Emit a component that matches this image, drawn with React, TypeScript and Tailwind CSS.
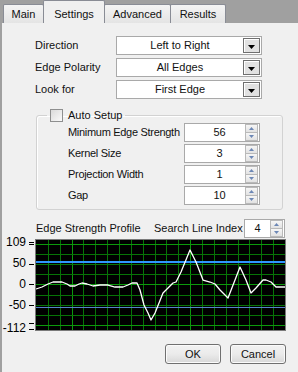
import React from "react";

const Tri = () => (
  <svg width="7" height="4" viewBox="0 0 7 4">
    <polygon points="0,0 7,0 3.5,4" fill="#000" />
  </svg>
);

function Combo({ value }: { value: string }) {
  return (
    <div className="w-[146px] shrink-0 h-[19px] bg-white border border-[#a9a9a9] flex items-center">
      <span className="flex-1 text-center leading-none whitespace-nowrap">{value}</span>
      <div className="w-[17px] h-[15px] mr-[1px] border border-[#6f6f6f] bg-[#e1e1e1] shadow-[inset_1px_1px_0_#ffffff] flex items-end justify-center pb-[3px]">
        <Tri />
      </div>
    </div>
  );
}

const SpinArrow = ({ up }: { up?: boolean }) => (
  <svg width="5" height="3" viewBox="0 0 5 3">
    <polygon points={up ? "0,3 5,3 2.5,0" : "0,0 5,0 2.5,3"} fill="#6c87b5" />
  </svg>
);

function Spin({ value, w, pl }: { value: string; w: string; pl: string }) {
  return (
    <div className={`${w} shrink-0 h-[19px] bg-white border border-[#a9a9a9] flex items-center`}>
      <span className={`flex-1 text-center leading-none ${pl}`}>{value}</span>
      <div className="w-[13px] h-[17px] mr-[1px] flex flex-col">
        <div className="flex-1 border border-[#b9b9b9] bg-gradient-to-b from-[#f6f6f6] to-[#e2e2e2] flex items-center justify-center">
          <SpinArrow up />
        </div>
        <div className="flex-1 border border-t-0 border-[#b9b9b9] bg-gradient-to-b from-[#f6f6f6] to-[#e2e2e2] flex items-center justify-center">
          <SpinArrow />
        </div>
      </div>
    </div>
  );
}

const profile: [number, number][] = [
  [36, 289], [42, 287], [48, 284], [53, 282], [62, 282], [67, 284], [70, 286], [75, 286],
  [79, 284], [82, 283], [87, 284], [93, 286], [100, 285], [108, 285], [115, 287], [123, 287],
  [128, 285], [132, 283], [137, 283], [140, 290], [144, 305], [148, 313], [151, 320],
  [155, 313], [163, 293], [168, 288], [173, 283], [176, 282], [181, 272], [190, 250],
  [196, 262], [203, 280], [210, 282], [215, 284], [220, 290], [228, 298], [235, 280],
  [240, 267], [246, 280], [251, 293], [256, 288], [263, 280], [266, 280], [271, 282],
  [276, 287], [285, 287],
];

function Chart() {
  const vy = (v: number) => 2 + ((109 - v) * 90) / 221;
  const pts = profile.map(([x, y]) => `${x - 2},${y - 238}`).join(" ");
  const vLines = Array.from({ length: 20 }, (_, i) => Math.round(34 + 11.857 * (i + 1)) + 0.5);
  const hVals = [100, 75, 50, 25, 0, -25, -50, -75, -100];
  const ticks = [3.7, 6.3, vy(50), vy(0), vy(-50), 85, 90.5];
  const labels: [string, number][] = [
    ["109", 5],
    ["50", vy(50)],
    ["0", vy(0)],
    ["-50", vy(-50) + 1],
    ["-112", 91],
  ];
  return (
    <svg width="296" height="94" className="overflow-visible block">
      <rect x="34" y="2" width="249" height="90" fill="#000" />
      {vLines.map((x, i) => (
        <line
          key={"v" + i}
          x1={x}
          x2={x}
          y1="2"
          y2="92"
          stroke={i === 2 || i === 12 ? "#0c9a0c" : "#077407"}
          strokeWidth="1"
        />
      ))}
      {hVals.map((v) => (
        <line
          key={"h" + v}
          x1="34"
          x2="283"
          y1={Math.round(vy(v)) + 0.5}
          y2={Math.round(vy(v)) + 0.5}
          stroke={v === 0 || v === 100 || v === -100 ? "#0c9a0c" : "#077407"}
          strokeWidth="1"
        />
      ))}
      <line x1="34" x2="283" y1="24" y2="24" stroke="#2f95ff" strokeWidth="2" />
      <line x1="34" x2="283" y1="69.5" y2="69.5" stroke="#5684cc" strokeWidth="1" />
      <polyline points={pts} fill="none" stroke="#ffffff" strokeWidth="1.3" strokeLinejoin="round" />
      <rect x="33.5" y="1.5" width="250" height="91" fill="none" stroke="#7a7a7a" strokeWidth="1" />
      {ticks.map((t, i) => (
        <line key={"t" + i} x1="27" x2="32" y1={Math.round(t) + 0.5} y2={Math.round(t) + 0.5} stroke="#000" strokeWidth="1" />
      ))}
      {labels.map(([s, y]) => (
        <text
          key={s}
          x="24"
          y={y}
          textAnchor="end"
          dominantBaseline="middle"
          fontSize="12"
          fontFamily="'Liberation Sans', Arial, sans-serif"
          fill="#000"
        >
          {s}
        </text>
      ))}
    </svg>
  );
}

export default function App() {
  return (
    <div className="w-[298px] h-[372px] bg-[#a0a0a0] flex flex-col overflow-hidden font-['Liberation_Sans',Arial,sans-serif] text-[11px] text-[#111]">
      <div className="h-[23px] shrink-0 flex items-end pl-[3px]">
        <div className="w-[41px] h-[19px] border border-b-0 border-[#898c95] rounded-t-[2px] bg-gradient-to-b from-[#f4f4f4] to-[#e4e4e4] flex items-center justify-center">
          Main
        </div>
        <div className="w-[62px] h-[23px] -ml-px border border-b-0 border-[#898c95] rounded-t-[2px] bg-[#f0f0f0] flex items-start justify-center pt-[5px] relative z-10">
          Settings
        </div>
        <div className="w-[67px] h-[19px] -ml-px border border-b-0 border-[#898c95] rounded-t-[2px] bg-gradient-to-b from-[#f4f4f4] to-[#e4e4e4] flex items-center justify-center">
          Advanced
        </div>
        <div className="w-[56px] h-[19px] -ml-px border border-b-0 border-[#898c95] rounded-t-[2px] bg-gradient-to-b from-[#f4f4f4] to-[#e4e4e4] flex items-center justify-center">
          Results
        </div>
      </div>
      <div className="flex-1 ml-[2px] bg-[#f0f0f0] flex flex-col">
        <div className="flex flex-col gap-[3px] mt-[13px]">
          {[
            ["Direction", "Left to Right"],
            ["Edge Polarity", "All Edges"],
            ["Look for", "First Edge"],
          ].map(([l, v]) => (
            <div key={l} className="h-[19px] flex items-center">
              <span className="w-[114px] shrink-0 pl-[33px] whitespace-nowrap">{l}</span>
              <Combo value={v} />
            </div>
          ))}
        </div>
        <fieldset className="mt-[10px] ml-[34px] w-[247px] border border-[#d2d2d2] rounded-[3px] shadow-[inset_1px_1px_0_#ffffff] pb-[4px]">
          <legend className="ml-[10px] pl-[3px] pr-[3px]">
            <div className="flex items-center gap-[5px] h-[13px]">
              <div className="w-[13px] h-[13px] border border-[#8e8f8f] bg-gradient-to-br from-[#dadada] to-[#fafafa]" />
              <span className="whitespace-nowrap">Auto Setup</span>
            </div>
          </legend>
          <div className="flex flex-col gap-[2px] pt-[1px]">
            {[
              ["Minimum Edge Strength", "56"],
              ["Kernel Size", "3"],
              ["Projection Width", "1"],
              ["Gap", "10"],
            ].map(([l, v]) => (
              <div key={l} className="h-[19px] flex items-center">
                <span className="w-[147px] shrink-0 pl-[31px] whitespace-nowrap tracking-[-0.3px]">{l}</span>
                <Spin value={v} w="w-[76px]" pl="pl-[9px]" />
              </div>
            ))}
          </div>
        </fieldset>
        <div className="mt-[9px] h-[19px] flex items-center">
          <span className="w-[152px] shrink-0 pl-[34px] whitespace-nowrap">Edge Strength Profile</span>
          <span className="w-[90px] shrink-0 whitespace-nowrap">Search Line Index</span>
          <Spin value="4" w="w-[41px]" pl="pl-[0px]" />
        </div>
        <Chart />
        <div className="mt-[12px] flex justify-end gap-[9px] pr-[12px]">
          {["OK", "Cancel"].map((b) => (
            <div
              key={b}
              className="w-[56px] h-[20px] border border-[#707070] rounded-[3px] bg-gradient-to-b from-[#f2f2f2] via-[#ebebeb] to-[#d8d8d8] shadow-[inset_0_0_0_1px_#fbfbfb] flex items-center justify-center"
            >
              {b}
            </div>
          ))}
        </div>
      </div>
    </div>
  );
}
